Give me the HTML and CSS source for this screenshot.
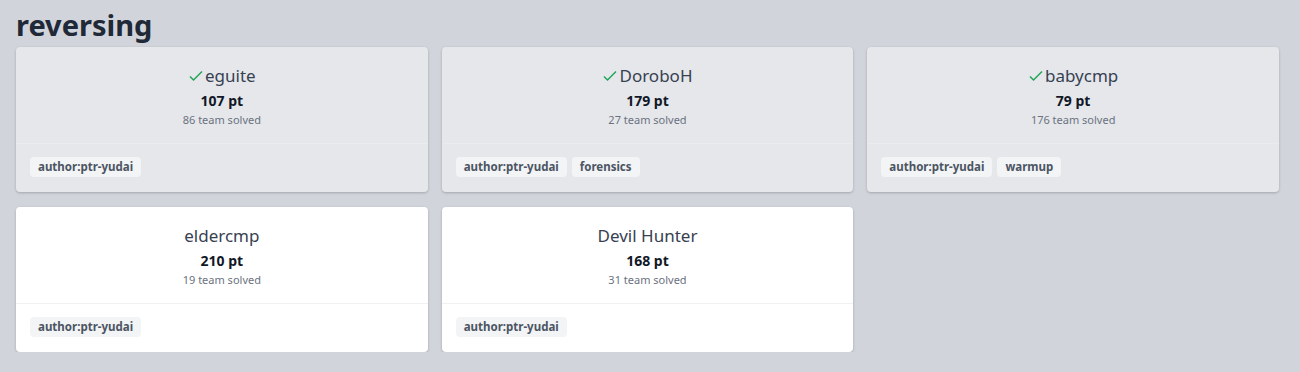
FILE: index.html
```html
<!DOCTYPE html>
<html lang="en">
<head>
    <meta charset="UTF-8">
    <meta name="viewport" content="width=device-width, initial-scale=1.0">
    <title>reversing</title>
    <link rel="stylesheet" href="styles.css">
</head>
<body>

    <!-- category section -->
    <section class="category">
        <h2 class="category-title">reversing</h2>
        <div class="challenges">
            <!-- solved -->
            <div class="card solved">
                <div class="card-body">
                    <div class="name"><svg class="check" viewBox="0 0 16 16"><path d="M2 8.5l3.5 3.5L14 3.5"/></svg>eguite</div>
                    <div class="points">107 pt</div>
                    <div class="solves">86 team solved</div>
                </div>
                <div class="card-tags">
                    <span class="tag">author:ptr-yudai</span>
                </div>
            </div>
            <div class="card solved">
                <div class="card-body">
                    <div class="name"><svg class="check" viewBox="0 0 16 16"><path d="M2 8.5l3.5 3.5L14 3.5"/></svg>DoroboH</div>
                    <div class="points">179 pt</div>
                    <div class="solves">27 team solved</div>
                </div>
                <div class="card-tags">
                    <span class="tag">author:ptr-yudai</span>
                    <span class="tag">forensics</span>
                </div>
            </div>
            <div class="card solved">
                <div class="card-body">
                    <div class="name"><svg class="check" viewBox="0 0 16 16"><path d="M2 8.5l3.5 3.5L14 3.5"/></svg>babycmp</div>
                    <div class="points">79 pt</div>
                    <div class="solves">176 team solved</div>
                </div>
                <div class="card-tags">
                    <span class="tag">author:ptr-yudai</span>
                    <span class="tag">warmup</span>
                </div>
            </div>
            <!-- not solved -->
            <div class="card">
                <div class="card-body">
                    <div class="name">eldercmp</div>
                    <div class="points">210 pt</div>
                    <div class="solves">19 team solved</div>
                </div>
                <div class="card-tags">
                    <span class="tag">author:ptr-yudai</span>
                </div>
            </div>
            <div class="card">
                <div class="card-body">
                    <div class="name">Devil Hunter</div>
                    <div class="points">168 pt</div>
                    <div class="solves">31 team solved</div>
                </div>
                <div class="card-tags">
                    <span class="tag">author:ptr-yudai</span>
                </div>
            </div>
        </div>
    </section>

</body>
</html>
```

FILE: styles.css
```css
body {
    margin: 0;
    background-color: #d1d5db;
    font-family: "Noto Sans", "Open Sans", sans-serif;
    color: #374151;
}

.category {
    padding: 6px 21px 0 16px;
}

.category-title {
    margin: 0 0 4px 0;
    font-size: 29px;
    line-height: 37px;
    font-weight: 700;
    color: #1f2937;
}

.challenges {
    display: grid;
    grid-template-columns: repeat(3, 1fr);
    column-gap: 14px;
    row-gap: 15px;
}

.card {
    background-color: #ffffff;
    border-radius: 4px;
    box-shadow: 0 1px 3px rgba(0, 0, 0, 0.15), 0 1px 2px rgba(0, 0, 0, 0.08);
    display: flex;
    flex-direction: column;
}

.card.solved {
    background-color: #e5e7eb;
}

.card-body {
    text-align: center;
    padding: 17px 16px 15px;
    border-bottom: 1px solid #f0f1f3;
}

.card.solved .card-body {
    border-bottom-color: #e9ebee;
}

.name {
    font-size: 17px;
    line-height: 24px;
    color: #374151;
    display: flex;
    justify-content: center;
    align-items: center;
}

.check {
    width: 16px;
    height: 16px;
    margin-right: 1px;
    fill: none;
    stroke: #22a55a;
    stroke-width: 1.5;
}

.points {
    font-size: 14px;
    line-height: 22px;
    font-weight: 700;
    color: #111827;
    margin-top: 2px;
}

.solves {
    font-size: 11px;
    line-height: 16px;
    color: #6b7280;
}

.card-tags {
    display: flex;
    gap: 5px;
    padding: 13px 14px 15px;
}

.tag {
    background-color: #f3f4f6;
    border-radius: 4px;
    padding: 0 8px;
    font-size: 11.5px;
    line-height: 20px;
    font-weight: 700;
    color: #4b5563;
}
```
